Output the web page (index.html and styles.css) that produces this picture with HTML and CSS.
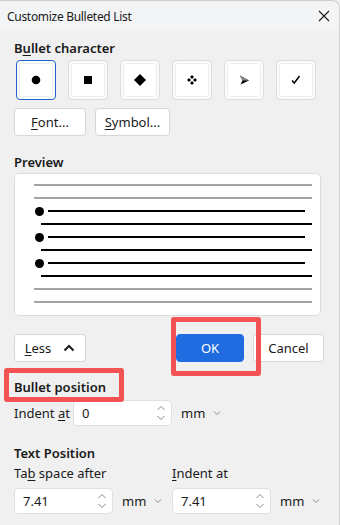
FILE: index.html
```html
<!DOCTYPE html>
<html>
<head>
<meta charset="utf-8">
<link rel="stylesheet" href="styles.css">
</head>
<body>
<div class="dialog">
  <div class="titlebar">
    <span class="title">Customize Bulleted List</span>
    <svg class="close" width="12" height="12" viewBox="0 0 12 12"><path d="M1 1 L11 11 M11 1 L1 11" stroke="#1a1a1a" stroke-width="1.1" fill="none"/></svg>
  </div>
  <div class="content">
    <div class="heading h-bullet">B<u>u</u>llet character</div>
    <div class="bullets">
      <div class="bbtn selected"><div class="binner"><svg width="14" height="14" viewBox="0 0 14 14"><circle cx="7" cy="7" r="4.3" fill="#000"/></svg></div></div>
      <div class="bbtn"><div class="binner"><svg width="14" height="14" viewBox="0 0 14 14"><rect x="3" y="3" width="8" height="8" fill="#000"/></svg></div></div>
      <div class="bbtn"><div class="binner"><svg width="14" height="14" viewBox="0 0 14 14"><path d="M7 1 L13 7 L7 13 L1 7 Z" fill="#000"/></svg></div></div>
      <div class="bbtn"><div class="binner"><svg width="14" height="14" viewBox="0 0 14 14"><path d="M7 2 L9 4 L7 6 L5 4 Z M7 8 L9 10 L7 12 L5 10 Z M4 5 L6 7 L4 9 L2 7 Z M10 5 L12 7 L10 9 L8 7 Z" fill="#000"/></svg></div></div>
      <div class="bbtn"><div class="binner"><svg width="14" height="14" viewBox="0 0 14 14"><path d="M3 2.5 L12 7.5 L3.5 11.5 L5.5 7.5 Z" fill="#000"/><path d="M3 2.5 L12 7.5 L5.5 7.5 Z" fill="#888"/></svg></div></div>
      <div class="bbtn"><div class="binner"><svg width="14" height="14" viewBox="0 0 14 14"><path d="M3 7.5 L5.3 10 L10.5 3" stroke="#000" stroke-width="1.5" fill="none"/></svg></div></div>
    </div>
    <div class="row btnrow1">
      <div class="btn w-font"><u>F</u>ont...</div>
      <div class="btn w-symbol"><u>S</u>ymbol...</div>
    </div>
    <div class="heading h-preview">Preview</div>
    <div class="preview">
      <div class="pl gray"></div>
      <div class="pl gray"></div>
      <div class="brow"><span class="dot"></span><span class="pl black short"></span></div>
      <div class="pl black full"></div>
      <div class="brow"><span class="dot"></span><span class="pl black short"></span></div>
      <div class="pl black full"></div>
      <div class="brow"><span class="dot"></span><span class="pl black short"></span></div>
      <div class="pl black full"></div>
      <div class="pl gray"></div>
      <div class="pl gray"></div>
    </div>
    <div class="row btnrow2">
      <div class="btn w-less"><span><u>L</u>ess</span><svg width="12" height="8" viewBox="0 0 12 8"><path d="M1.5 6.5 L6 2 L10.5 6.5" stroke="#1a1a1a" stroke-width="2" fill="none"/></svg></div>
      <div class="spacer"></div>
      <div class="btn primary w-ok">OK</div>
      <div class="btn w-cancel">Cancel</div>
      <div class="hl hl-ok"></div>
    </div>
    <div class="heading h-pos">Bullet position<div class="hl hl-pos"></div></div>
    <div class="row indentrow">
      <span class="lbl lbl-indent">Indent <u>a</u>t</span>
      <div class="input w-in1"><span>0</span><svg class="spin" width="10" height="16" viewBox="0 0 10 16"><path d="M1.5 5 L5 1.5 L8.5 5 M1.5 11 L5 14.5 L8.5 11" stroke="#8a8a8a" stroke-width="1" fill="none"/></svg></div>
      <span class="unit">mm</span><svg class="chev" width="8" height="6" viewBox="0 0 8 6"><path d="M1 1.5 L4 4.5 L7 1.5" stroke="#8a8a8a" stroke-width="1" fill="none"/></svg>
    </div>
    <div class="heading h-text">Text Position</div>
    <div class="grid2">
      <div class="col">
        <span class="lbl">Ta<u>b</u> space after</span>
        <div class="row inrow">
          <div class="input w-in2"><span>7.41</span><svg class="spin" width="10" height="16" viewBox="0 0 10 16"><path d="M1.5 5 L5 1.5 L8.5 5 M1.5 11 L5 14.5 L8.5 11" stroke="#8a8a8a" stroke-width="1" fill="none"/></svg></div>
          <span class="unit">mm</span><svg class="chev" width="8" height="6" viewBox="0 0 8 6"><path d="M1 1.5 L4 4.5 L7 1.5" stroke="#8a8a8a" stroke-width="1" fill="none"/></svg>
        </div>
      </div>
      <div class="col">
        <span class="lbl"><u>I</u>ndent at</span>
        <div class="row inrow">
          <div class="input w-in2"><span>7.41</span><svg class="spin" width="10" height="16" viewBox="0 0 10 16"><path d="M1.5 5 L5 1.5 L8.5 5 M1.5 11 L5 14.5 L8.5 11" stroke="#8a8a8a" stroke-width="1" fill="none"/></svg></div>
          <span class="unit">mm</span><svg class="chev" width="8" height="6" viewBox="0 0 8 6"><path d="M1 1.5 L4 4.5 L7 1.5" stroke="#8a8a8a" stroke-width="1" fill="none"/></svg>
        </div>
      </div>
    </div>
  </div>
</div>
</body>
</html>
```
FILE: styles.css
```css
* { box-sizing: border-box; }
html, body { margin: 0; padding: 0; }
body {
  background: #f0f0f0;
  font-family: "Noto Sans", "Open Sans", sans-serif;
  color: #1a1a1a;
  width: 340px;
  height: 525px;
  overflow: hidden;
}
u { text-decoration-thickness: 1px; text-underline-offset: 2px; }
.dialog {
  width: 340px;
  height: 525px;
  background: #f0f0f0;
  border-top: 1px solid #cfcfcf;
  border-right: 1px solid #cfcfcf;
  border-top-right-radius: 8px;
  overflow: hidden;
}
.titlebar {
  height: 30px;
  background: #f3f4f6;
  display: flex;
  align-items: center;
  justify-content: space-between;
  padding: 0 9px 0 7px;
}
.title { font-size: 12px; letter-spacing: -0.3px; }
.close { display: block; }
.content { padding: 0 14px; position: relative; }
.heading {
  font-size: 13px;
  font-weight: 600;
  line-height: 18px;
  height: 18px;
}
.h-bullet { margin-top: 8px; }
.bullets { display: flex; gap: 12px; margin-top: 3px; margin-left: 2px; }
.bbtn {
  width: 40px; height: 40px;
  border: 1px solid #dcdcdc;
  border-radius: 4px;
  background: #fbfbfb;
  padding: 2px;
}
.bbtn.selected { border-color: #2466c8; }
.binner {
  width: 100%; height: 100%;
  background: #fff;
  border: 1px solid #ececec;
  border-radius: 3px;
  display: flex; align-items: center; justify-content: center;
}
.binner svg { display: block; }
.row { display: flex; align-items: center; }
.btnrow1 { margin-top: 8px; gap: 9px; }
.btn {
  height: 28px;
  background: #fff;
  border: 1px solid #d6d6d6;
  border-radius: 4px;
  display: flex; align-items: center; justify-content: center;
  font-size: 13px;
}
.w-font { width: 72px; }
.w-symbol { width: 75px; }
.h-preview { margin-top: 17px; }
.preview {
  margin-top: 2px;
  width: 307px;
  height: 143px;
  background: #fff;
  border: 1px solid #dcdcdc;
  border-radius: 5px;
  padding: 10px 8px 0 19px;
  display: flex; flex-direction: column; gap: 11px;
}
.pl { height: 2px; display: block; }
.pl.gray { background: #a3a3a3; }
.pl.black { background: #000; }
.pl.full { margin-left: 7px; }
.brow { display: flex; align-items: center; height: 2px; }
.dot {
  width: 9px; height: 9px; border-radius: 50%;
  background: #000;
  margin-left: 1px;
  flex: none;
}
.pl.short { width: 257px; margin-left: 4px; }
.btnrow2 { margin-top: 18px; position: relative; }
.w-less { width: 72px; gap: 12px; }
.w-less svg { display: block; margin-top: -1px; }
.spacer { width: 90px; }
.primary { background: #1f6be0; border-color: #1f6be0; color: #fff; width: 68px; }
.w-cancel { width: 71px; margin-left: 9px; }
.hl {
  position: absolute;
  border: 5px solid #f25454;
  border-radius: 3px;
}
.hl-ok { left: 157px; top: -17px; width: 90px; height: 59px; }
.h-pos { margin-top: 16px; position: relative; }
.hl-pos { left: -10px; top: -10px; width: 120px; height: 34px; }
.indentrow { margin-top: 4px; }
.lbl { font-size: 13px; line-height: 18px; }
.lbl-indent { width: 59px; }
.input {
  height: 26px;
  background: #fff;
  border: 1px solid #e0e0e0;
  border-radius: 4px;
  display: flex; align-items: center; justify-content: space-between;
  padding: 0 5px 0 8px;
  font-size: 13px;
}
.w-in1 { width: 99px; }
.w-in2 { width: 99px; }
.spin { display: block; }
.unit { font-size: 13px; margin-left: 9px; }
.chev { display: block; margin-left: 8px; }
.h-text { margin-top: 18px; }
.grid2 { display: grid; grid-template-columns: 158px 1fr; margin-top: 2px; }
.col { display: flex; flex-direction: column; }
.inrow { margin-top: 6px; }
```
